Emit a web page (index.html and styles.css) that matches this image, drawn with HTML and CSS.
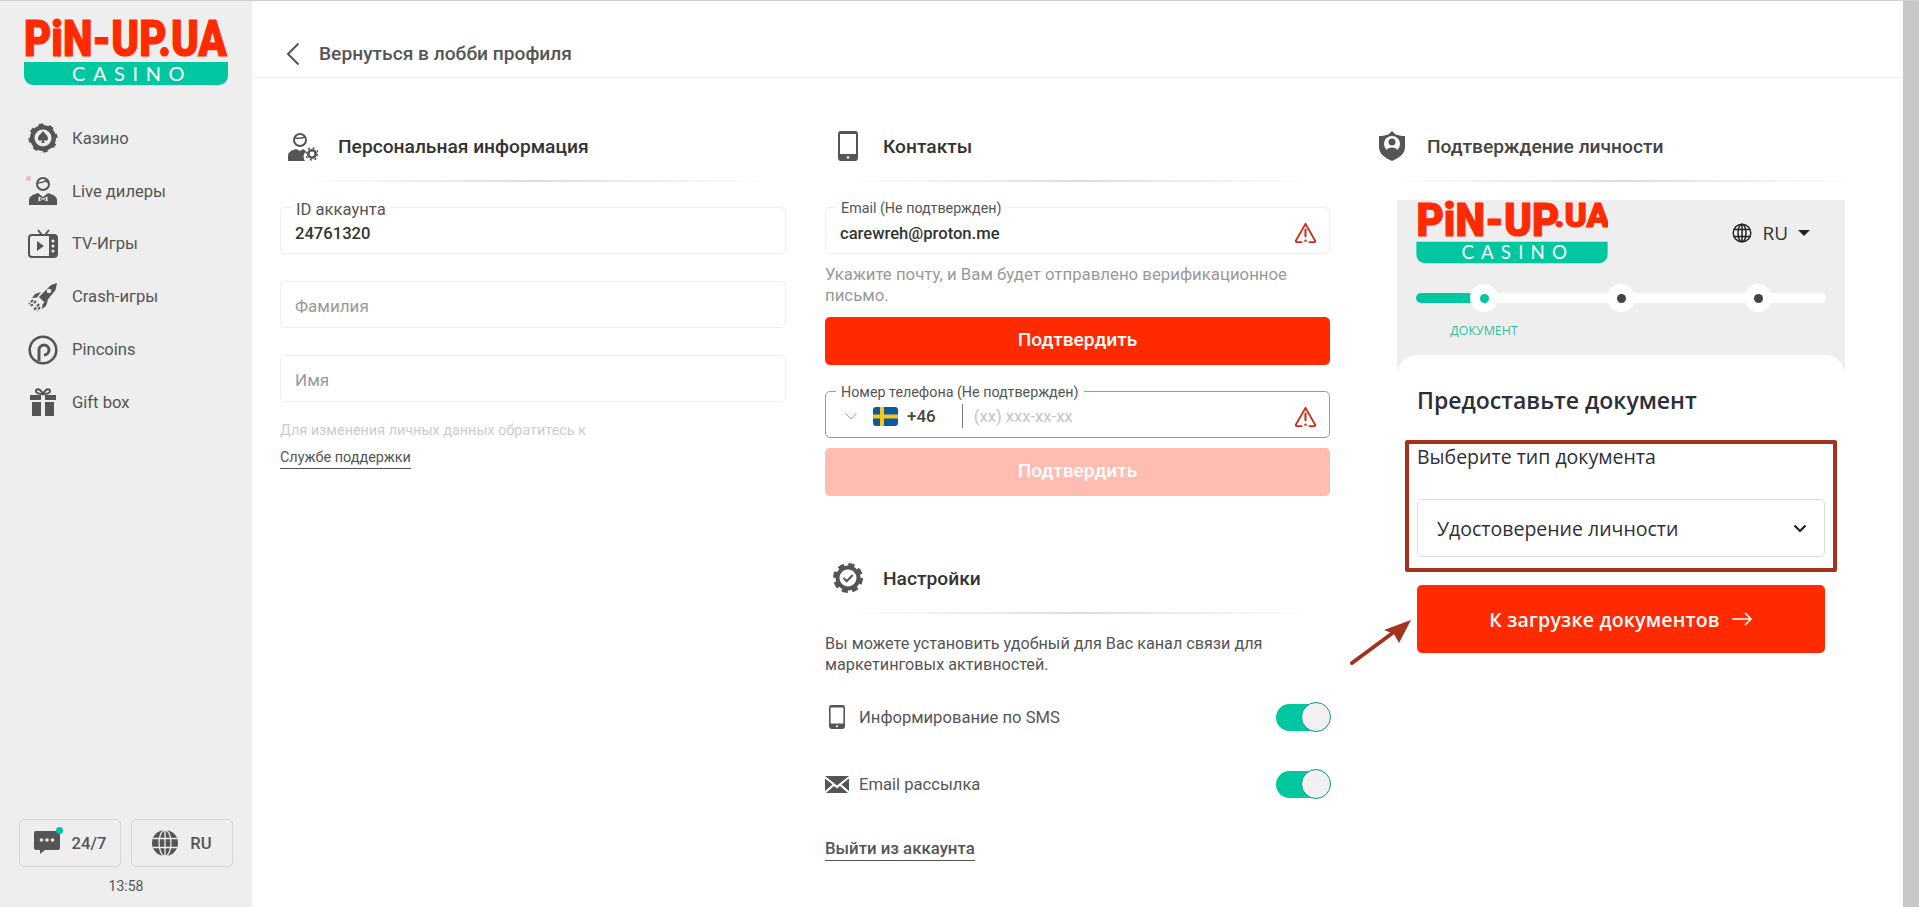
FILE: index.html
```html
<!DOCTYPE html>
<html lang="ru">
<head>
<meta charset="utf-8">
<title>Профиль</title>
<link rel="stylesheet" href="styles.css">
</head>
<body>
<svg class="defs" width="0" height="0" aria-hidden="true">
  <symbol id="warn" viewBox="0 0 24 24">
    <path d="M12 3 L22 20.5 Q22.5 22 20.5 22 H16 M12 3 L2 20.5 Q1.5 22 3.500 22 H8" fill="none" stroke="#c9301d" stroke-width="2" stroke-linecap="round"/>
    <path d="M12 9v7" stroke="#c9301d" stroke-width="2.200" stroke-linecap="round"/>
    <circle cx="12" cy="20.500" r="1.300" fill="#c9301d"/>
  </symbol>
  <symbol id="phone" viewBox="0 0 20 30">
    <path d="M3 0h14a3 3 0 0 1 3 3v24a3 3 0 0 1-3 3H3a3 3 0 0 1-3-3V3a3 3 0 0 1 3-3zM2 3v20h16V3z" fill="#555" fill-rule="evenodd"/>
    <circle cx="10" cy="26.500" r="1.300" fill="#fff"/>
  </symbol>
</svg>

<div class="app">
  <aside class="sidebar">
    <svg class="side-logo" viewBox="0 -12 204 80">
      <text class="logo-word" transform="translate(0 36) scale(.84 1)">PiN-UP.UA</text>
      <path d="M0 42H204V56a9 9 0 0 1-9 9H9a9 9 0 0 1-9-9z" fill="#00c79f"/>
      <text x="48" y="61" class="logo-sub">CASINO</text>
    </svg>
    <nav class="nav">
      <a class="nav-item">
        <svg class="nav-icon" viewBox="0 0 30 30">
          <circle cx="15" cy="15" r="11.500" fill="none" stroke="#555" stroke-width="6"/>
          <circle cx="15" cy="15" r="14" fill="none" stroke="#eee" stroke-width="2" stroke-dasharray="6 5"/>
          <path d="M15 8c2 3 5 4.500 5 7.500 0 2.500-3 3-4.200 1.200l.8 3.300h-3.200l.8-3.300C13 18.500 10 18 10 15.500 10 12.500 13 11 15 8z" fill="#555"/>
        </svg>
        <span>Казино</span>
      </a>
      <a class="nav-item">
        <i class="pink-dot"></i>
        <svg class="nav-icon" viewBox="0 0 30 30">
          <circle cx="15" cy="8" r="6" fill="none" stroke="#555" stroke-width="2"/>
          <path d="M9 6.500c3 .5 7-.5 8.500-2 1 1.500 2.500 2 3.500 2.500" fill="none" stroke="#555" stroke-width="1.600"/>
          <path d="M1 29v-5c0-4 5-5.500 9-7l5 4 5-4c4 1.500 9 3 9 7v5z" fill="#555"/>
          <path d="M10.500 20.500L15 22.500l4.500-2v5L15 23.500l-4.500 2z" fill="#eee"/>
          <path d="M12 22l3 1.500 3-1.500v2l-3-1-3 1z" fill="#555"/>
        </svg>
        <span>Live дилеры</span>
      </a>
      <a class="nav-item">
        <svg class="nav-icon" viewBox="0 0 30 30">
          <path d="M10 1l4 5M21 1l-4 5" stroke="#555" stroke-width="2" fill="none"/>
          <rect x="1" y="6" width="28" height="22" rx="3" fill="none" stroke="#555" stroke-width="2"/>
          <rect x="21" y="6" width="8" height="22" fill="#555"/>
          <circle cx="25" cy="12" r="1.500" fill="#eee"/><circle cx="25" cy="17" r="1.500" fill="#eee"/><circle cx="25" cy="22" r="1.500" fill="#eee"/>
          <path d="M9 12l7 5-7 5z" fill="#555"/>
        </svg>
        <span>TV-Игры</span>
      </a>
      <a class="nav-item">
        <svg class="nav-icon" viewBox="0 0 30 30">
          <path d="M29 1l-1.500 7L17 21l-6-6L23 3z" fill="#555"/>
          <circle cx="21" cy="9" r="2.300" fill="#eee"/>
          <path d="M13 10l-6 2-3 4 5-.5zM20 18l-2 6-4 3 .5-5z" fill="#555"/>
          <path d="M8 19l-5 5M11 22l-5 6M5 18l-4 4M12 25l-3 4" stroke="#555" stroke-width="2" stroke-dasharray="3 1.500" fill="none"/>
        </svg>
        <span>Crash-игры</span>
      </a>
      <a class="nav-item">
        <svg class="nav-icon" viewBox="0 0 30 30">
          <circle cx="15" cy="15" r="13.300" fill="none" stroke="#555" stroke-width="2.600"/>
          <path d="M11 26V15a5 5 0 1 1 5 5" fill="none" stroke="#555" stroke-width="3"/>
        </svg>
        <span>Pincoins</span>
      </a>
      <a class="nav-item">
        <svg class="nav-icon" viewBox="0 0 30 30">
          <path d="M15 7C12 7 8 6.500 8 4s4-3 7 3c3-6 7-5.500 7-3s-4 3-7 3z" fill="none" stroke="#555" stroke-width="2"/>
          <path d="M2 8h11v5H2zM17 8h11v5H17zM4 15h9v14H4zM17 15h9v14h-9z" fill="#555"/>
        </svg>
        <span>Gift box</span>
      </a>
    </nav>
    <div class="side-bottom">
      <div class="side-btns">
        <a class="side-btn">
          <span class="chat">
            <svg class="chat-icon" viewBox="0 0 26 24"><path d="M2 1h22a2 2 0 0 1 2 2v15a2 2 0 0 1-2 2H11l-5 4v-4H2a2 2 0 0 1-2-2V3a2 2 0 0 1 2-2z" fill="#555"/><circle cx="7.500" cy="10" r="1.800" fill="#eee"/><circle cx="13" cy="10" r="1.800" fill="#eee"/><circle cx="18.500" cy="10" r="1.800" fill="#eee"/></svg>
            <i class="chat-dot"></i>
          </span>
          <span>24/7</span>
        </a>
        <a class="side-btn">
          <svg class="globe-big" viewBox="0 0 26 26"><circle cx="13" cy="13" r="13" fill="#555"/><g fill="none" stroke="#eee" stroke-width="1.300"><ellipse cx="13" cy="13" rx="6" ry="13"/><path d="M13 0v26M1 8.500h24M1 17.500h24"/></g></svg>
          <span>RU</span>
        </a>
      </div>
      <div class="clock">13:58</div>
    </div>
  </aside>

  <main class="main">
    <header class="topbar">
      <svg class="back" viewBox="0 0 14 24"><path d="M12.500 1.500L2 12l10.500 10.500" fill="none" stroke="#555" stroke-width="2"/></svg>
      <span>Вернуться в лобби профиля</span>
    </header>

    <div class="columns">
      <section class="col">
        <div class="sec-head">
          <span class="sec-icon">
            <svg class="ic-user" viewBox="0 0 30 29">
              <circle cx="12" cy="8" r="6" fill="none" stroke="#555" stroke-width="2"/>
              <path d="M6.500 6c3 .5 8 0 10.500-1" fill="none" stroke="#555" stroke-width="1.500"/>
              <path d="M0 29v-5c0-4 4-6 8-7l4 2 3-2c1 1 2 1 3 2-3 3-3 7-1 10z" fill="#555"/>
              <circle cx="24" cy="22" r="3.700" fill="none" stroke="#555" stroke-width="2.600"/>
              <circle cx="24" cy="22" r="6" fill="none" stroke="#555" stroke-width="1.600" stroke-dasharray="2 2.700"/>
            </svg>
          </span>
          <h2>Персональная информация</h2>
        </div>
        <div class="rule"></div>
        <div class="field field-first">
          <label class="field-label id-label">ID аккаунта</label>
          <span class="value">24761320</span>
        </div>
        <div class="field field-gap"><span class="ph">Фамилия</span></div>
        <div class="field field-gap"><span class="ph">Имя</span></div>
        <p class="note">Для изменения личных данных обратитесь к</p>
        <a class="support">Службе поддержки</a>
      </section>

      <section class="col">
        <div class="sec-head">
          <span class="sec-icon"><svg class="ic-phone"><use href="#phone"/></svg></span>
          <h2>Контакты</h2>
        </div>
        <div class="rule"></div>
        <div class="field field-first">
          <label class="field-label">Email (Не подтвержден)</label>
          <span class="value">carewreh@proton.me</span>
          <svg class="warn"><use href="#warn"/></svg>
        </div>
        <p class="hint">Укажите почту, и Вам будет отправлено верификационное письмо.</p>
        <a class="btn">Подтвердить</a>
        <div class="field field-phone">
          <label class="field-label">Номер телефона (Не подтвержден)</label>
          <svg class="drop" viewBox="0 0 12 7"><path d="M.5.500L6 6l5.500-5.500" fill="none" stroke="#aaa"/></svg>
          <svg class="flag" viewBox="0 0 25 19"><rect width="25" height="19" rx="3" fill="#0b5a9d"/><path d="M7 0h4v19H7zM0 7.500h25v4H0z" fill="#f5c518"/></svg>
          <span class="code">+46</span>
          <i class="sep"></i>
          <span class="ph-phone">(xx) xxx-xx-xx</span>
          <svg class="warn"><use href="#warn"/></svg>
        </div>
        <a class="btn btn-off">Подтвердить</a>

        <div class="sec-head sec-settings">
          <span class="sec-icon">
            <svg class="ic-gear" viewBox="0 0 30 30">
              <circle cx="15" cy="15" r="10.500" fill="none" stroke="#555" stroke-width="4"/>
              <circle cx="15" cy="15" r="13" fill="none" stroke="#555" stroke-width="4" stroke-dasharray="6 4.200"/>
              <path d="M10.500 15l3.200 3.200 6-6.200" fill="none" stroke="#555" stroke-width="2"/>
            </svg>
          </span>
          <h2>Настройки</h2>
        </div>
        <div class="rule"></div>
        <p class="about">Вы можете установить удобный для Вас канал связи для маркетинговых активностей.</p>
        <div class="opt opt-sms">
          <svg class="opt-phone"><use href="#phone"/></svg>
          <span class="opt-text">Информирование по SMS</span>
          <span class="toggle"><i class="knob"></i></span>
        </div>
        <div class="opt opt-mail">
          <svg class="opt-mail-icon" viewBox="0 0 24 17"><path d="M0 0l12 9.500L24 0zM0 2.500V15l7.500-6.500zM24 2.500V15l-7.500-6.500zM1 17h22l-8-7-3 2.500L9 10z" fill="#555"/></svg>
          <span class="opt-text">Email рассылка</span>
          <span class="toggle"><i class="knob"></i></span>
        </div>
        <a class="logout">Выйти из аккаунта</a>
      </section>

      <section class="col">
        <div class="sec-head">
          <span class="sec-icon">
            <svg class="ic-shield" viewBox="0 0 26 30">
              <path d="M13 0l3 3c3 1.500 6 2 10 2v11c0 7-6 11-13 14C6 27 0 23 0 16V5c4 0 7-.5 10-2z" fill="#555"/>
              <circle cx="13" cy="13" r="8" fill="#fff"/>
              <circle cx="13" cy="11" r="3.500" fill="#555"/>
              <path d="M6 21c1-3 4-4.500 7-4.500s6 1.500 7 4.500l-7 5z" fill="#555"/>
            </svg>
          </span>
          <h2 class="h-light">Подтверждение личности</h2>
        </div>
        <div class="rule"></div>

        <div class="kyc">
          <div class="kyc-top">
            <div class="kyc-head">
              <svg class="kyc-logo" viewBox="0 -12 204 80">
                <text class="logo-word" transform="translate(0 36) scale(.9 1)">PiN-UP</text>
                <text class="logo-word logo-ua" x="147" y="26">.UA</text>
                <path d="M0 42H204V56a9 9 0 0 1-9 9H9a9 9 0 0 1-9-9z" fill="#00c79f"/>
                <text x="48" y="61" class="logo-sub">CASINO</text>
              </svg>
              <div class="lang">
                <svg class="globe" viewBox="0 0 20 20"><g fill="none" stroke="#222" stroke-width="1.500"><circle cx="10" cy="10" r="8.800"/><ellipse cx="10" cy="10" rx="4" ry="8.800"/><path d="M10 1v18M2 6.500h16M2 13.500h16"/></g></svg>
                <span>RU</span>
                <i class="caret"></i>
              </div>
            </div>
            <div class="steps">
              <i class="steps-fill"></i>
              <span class="step step-on"><i></i></span>
              <span class="step"><i></i></span>
              <span class="step"><i></i></span>
            </div>
            <div class="step-name">ДОКУМЕНТ</div>
          </div>
          <div class="kyc-panel">
            <h3>Предоставьте документ</h3>
            <div class="doc-label">Выберите тип документа</div>
            <div class="doc-select">
              <span>Удостоверение личности</span>
              <svg class="doc-chev" viewBox="0 0 14 9"><path d="M1.500 1.500L7 7l5.500-5.500" fill="none" stroke="#222" stroke-width="2.200"/></svg>
            </div>
            <a class="doc-btn">
              <span>К загрузке документов</span>
              <svg class="doc-arrow" viewBox="0 0 21 14"><path d="M0 7h19M13 1l6 6-6 6" fill="none" stroke="#fff" stroke-width="1.600"/></svg>
            </a>
            <div class="mark-box"></div>
            <svg class="mark-arrow" viewBox="0 0 64 48"><path d="M2 46L48 12" stroke="#a3331c" stroke-width="4" stroke-linecap="round"/><path d="M61 3L49 26l-5-9-10-4z" fill="#a3331c"/></svg>
          </div>
        </div>
      </section>
    </div>
  </main>
  <div class="scrollbar"></div>
</div>
</body>
</html>
```

FILE: styles.css
```css
* { box-sizing: border-box; }
html, body { margin: 0; height: 907px; overflow: hidden; background: #fff; }
body { font-family: Roboto, "Liberation Sans", sans-serif; color: #555; }
a { display: block; }
i { display: block; }
h2, h3, p { margin: 0; }
.defs { position: absolute; }

.logo-word { font-family: Roboto, sans-serif; font-weight: 900; font-size: 50px; fill: #ff2a00; stroke: #ff2a00; stroke-width: 1.2px; }
.logo-word.logo-ua { font-size: 36px; }
.logo-sub { font-family: Lato, Roboto, sans-serif; font-weight: 400; font-size: 20px; fill: #fff; letter-spacing: 7.6px; }

.app { display: flex; height: 907px; border-top: 1px solid #cfcfcf; }

/* sidebar */
.sidebar { width: 252px; flex: none; background: #eee; display: flex; flex-direction: column; padding-top: 7px; }
.side-logo { width: 204px; height: 80px; margin-left: 24px; flex: none; }
.nav { margin-top: 24px; }
.nav-item { position: relative; display: flex; align-items: center; gap: 14px; height: 52.8px; padding-left: 28px; font-size: 16.6px; color: #555; }
.nav-icon { width: 30px; height: 30px; flex: none; }
.pink-dot { position: absolute; left: 26px; top: 11px; width: 5px; height: 5px; border-radius: 50%; background: #f3b9c0; }
.side-bottom { margin-top: auto; padding-bottom: 13px; }
.side-btns { display: flex; gap: 10px; padding: 0 19px; }
.side-btn { flex: 1; height: 48px; border: 1px solid #d4d4d4; border-radius: 5px; display: flex; align-items: center; justify-content: center; gap: 12px; font-size: 16.6px; font-weight: 500; color: #555; }
.chat { position: relative; display: block; width: 26px; height: 24px; margin-top: -3px; }
.chat-icon { width: 26px; height: 24px; display: block; }
.chat-dot { position: absolute; right: -3px; top: -3px; width: 7px; height: 7px; border-radius: 50%; background: #00c79f; }
.globe-big { width: 26px; height: 26px; }
.clock { text-align: center; margin-top: 11px; font-size: 14px; line-height: 16px; color: #555; }

/* main */
.main { flex: 1; min-width: 0; }
.topbar { height: 77px; border-bottom: 1px solid #eee; display: flex; align-items: center; padding: 29px 0 0 34px; gap: 19px; font-size: 19.2px; font-weight: 500; color: #555; }
.back { width: 14px; height: 24px; flex: none; }
.columns { display: grid; grid-template-columns: 506px 505px 505px; column-gap: 39px; padding: 46px 0 0 28px; }
.sec-head { display: flex; align-items: center; height: 44px; gap: 12px; }
.sec-icon { width: 46px; height: 44px; display: flex; align-items: center; justify-content: center; flex: none; }
.sec-head h2 { font-size: 19.2px; font-weight: 500; color: #333; }
.sec-head h2.h-light { color: #444; }
.ic-user { width: 30px; height: 29px; }
.ic-phone { width: 20px; height: 30px; }
.ic-gear { width: 30px; height: 30px; }
.ic-shield { width: 26px; height: 30px; }
.rule { height: 2px; margin: 12px 14px 0 18px; background: linear-gradient(90deg, rgba(220,220,220,0), #ddd 50%, rgba(220,220,220,0)); }

/* fields */
.field { position: relative; display: flex; align-items: center; height: 47px; padding: 5px 14px 0; border: 1px solid #eee; border-radius: 5px; font-size: 16.6px; }
.field-first { margin-top: 25px; }
.field-gap { margin-top: 27px; padding-top: 3px; }
.field-label { position: absolute; left: 10px; top: -7px; background: #fff; padding: 0 5px; font-size: 14.3px; line-height: 15px; color: #555; }
.id-label { font-size: 16.6px; top: -6px; }
.value { font-size: 16.6px; font-weight: 500; color: #333; }
.ph { font-size: 17px; color: #999; }
.note { margin-top: 21px; font-size: 14.4px; line-height: 16px; color: #ccc; }
.support { display: inline-block; margin-top: 11px; font-size: 14.4px; line-height: 16px; color: #555; padding-bottom: 2px; border-bottom: 1px solid #555; }
.warn { position: absolute; right: 12px; top: 13px; width: 23px; height: 23px; }
.hint { margin-top: 10px; font-size: 16.8px; line-height: 21px; color: #999; }
.btn { height: 48px; margin-top: 11px; background: #ff2a00; border-radius: 5px; color: #fff; font-size: 19.2px; font-weight: 500; text-align: center; line-height: 46px; }
.btn-off { background: #ffbcb1; margin-top: 10px; color: #fff; }
.field-phone { margin-top: 26px; height: 47px; border-color: #9b9b9b; padding: 3px 0 0 19px; }
.drop { width: 12px; height: 7px; flex: none; }
.flag { width: 25px; height: 19px; flex: none; margin-left: 16px; }
.code { margin-left: 9px; font-size: 17px; font-weight: 500; color: #444; }
.sep { width: 1px; height: 24px; background: #777; margin-left: 26px; }
.ph-phone { margin-left: 11px; font-size: 16.6px; color: #c4c4c4; }

/* settings */
.sec-settings { margin-top: 60px; }
.about { margin-top: 19px; font-size: 16.2px; line-height: 21px; color: #555; }
.opt { display: flex; align-items: center; height: 32px; font-size: 16.6px; color: #555; }
.opt-sms { margin-top: 26px; }
.opt-mail { margin-top: 35px; }
.opt-phone { width: 16px; height: 24px; margin-left: 4px; flex: none; }
.opt-mail-icon { width: 24px; height: 17px; flex: none; }
.opt-sms .opt-text { margin-left: 14px; }
.opt-mail .opt-text { margin-left: 10px; }
.toggle { position: relative; margin-left: auto; width: 54px; height: 27px; border-radius: 14px; background: #00c79f; }
.knob { position: absolute; right: -1px; top: -2px; width: 30px; height: 30px; border-radius: 50%; background: #f1f1f1; border: 1px solid #0a9a7f; }
.logout { display: inline-block; margin-top: 39px; font-size: 16.8px; font-weight: 500; color: #555; line-height: 18px; padding-bottom: 3px; border-bottom: 1px solid #555; }

/* kyc */
.kyc { margin: 18px 0 0 28px; width: 448px; }
.kyc-top { display: flow-root; height: 176px; background: #eee; padding: 0 19px; }
.kyc-head { display: flex; justify-content: space-between; height: 75px; margin-top: -9px; }
.kyc-logo { width: 192px; height: 75px; flex: none; }
.lang { display: flex; align-items: center; font-family: "Open Sans", sans-serif; font-size: 19px; color: #333; padding: 9px 16px 0 0; }
.globe { width: 20px; height: 20px; }
.lang span { margin-left: 10px; }
.caret { margin-left: 10px; border: 6px solid transparent; border-top: 6px solid #222; border-bottom: 0; }
.steps { position: relative; display: flex; align-items: center; gap: 109px; height: 10px; width: 410px; margin-top: 27px; padding-left: 54px; background: #fff; border-radius: 5px; }
.steps-fill { position: absolute; left: 0; top: 0; width: 56px; height: 10px; background: #00c79f; border-radius: 5px 0 0 5px; }
.step { position: relative; flex: none; width: 28px; height: 28px; border-radius: 50%; background: #fff; display: flex; align-items: center; justify-content: center; }
.step i { width: 9px; height: 9px; border-radius: 50%; background: #444; }
.step-on i { background: #00c79f; }
.step-name { width: 136px; text-align: center; margin-top: 20px; font-family: "Open Sans", sans-serif; font-size: 12.4px; line-height: 16px; color: #2ebfa0; }
.kyc-panel { position: relative; background: #fff; border-radius: 20px 20px 0 0; margin-top: -21px; padding: 30px 20px 0; font-family: "Open Sans", sans-serif; }
.kyc-panel h3 { font-size: 23px; line-height: 30px; font-weight: 600; color: #2c2f36; }
.doc-label { margin-top: 29px; font-size: 19.5px; line-height: 26px; color: #2c2f36; white-space: nowrap; }
.doc-select { display: flex; align-items: center; justify-content: space-between; height: 58px; margin-top: 29px; padding: 0 17px 0 19px; border: 1px solid #ddd; border-radius: 5px; font-size: 19.5px; color: #2c2f36; }
.doc-chev { width: 14px; height: 9px; }
.doc-btn { display: flex; align-items: center; justify-content: center; gap: 12px; height: 68px; margin-top: 28px; background: #ff2a00; border-radius: 5px; color: #fff; font-size: 19.5px; font-weight: 600; letter-spacing: .2px; }
.doc-arrow { width: 21px; height: 14px; }
.mark-box { position: absolute; left: 8px; top: 85px; width: 432px; height: 132px; border: 4px solid #a3331c; border-radius: 2px; }
.mark-arrow { position: absolute; left: -47px; top: 262px; width: 64px; height: 48px; }

.scrollbar { width: 16px; flex: none; background: #c8c8c8; }
```
